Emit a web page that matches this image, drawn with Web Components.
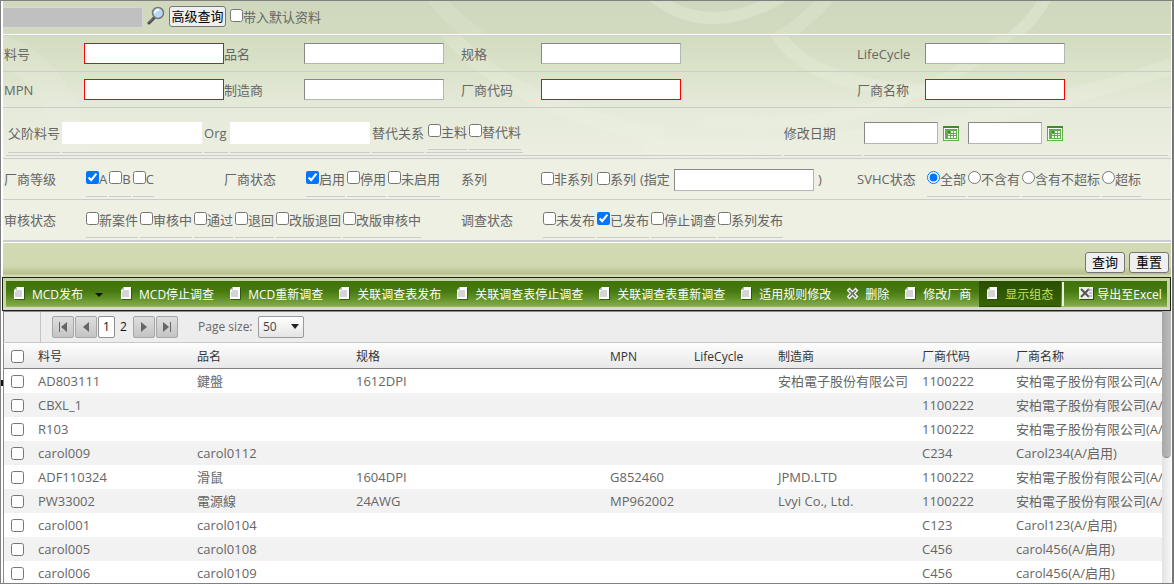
<!DOCTYPE html>
<html lang="zh-CN">
<head>
<meta charset="utf-8">
<title>MCD</title>
<style>
html, body { margin: 0; height: 100%; }
body {
  font: 13px/20px "Open Sans", "Noto Sans CJK SC", sans-serif;
  color: #666;
  background: #fff;
}
</style>
</head>
<body>
<mcd-page>
  <mcd-search-bar slot="search"></mcd-search-bar>
  <mcd-form slot="form">
    <mcd-row>
      <mcd-field required>料号</mcd-field>
      <mcd-field>品名</mcd-field>
      <mcd-field>规格</mcd-field>
      <mcd-field narrow>LifeCycle</mcd-field>
    </mcd-row>
    <mcd-row>
      <mcd-field required>MPN</mcd-field>
      <mcd-field>制造商</mcd-field>
      <mcd-field required>厂商代码</mcd-field>
      <mcd-field narrow required>厂商名称</mcd-field>
    </mcd-row>
    <mcd-relation-row></mcd-relation-row>
    <mcd-row tall>
      <mcd-options name="grade" options="A*|B|C">厂商等级</mcd-options>
      <mcd-options name="vendor" options="启用*|停用|未启用">厂商状态</mcd-options>
      <mcd-series>系列</mcd-series>
      <mcd-options narrow type="radio" name="svhc" options="全部*|不含有|含有不超标|超标">SVHC状态</mcd-options>
    </mcd-row>
    <mcd-row tall last>
      <mcd-options wide name="audit" options="新案件|审核中|通过|退回|改版退回|改版审核中">审核状态</mcd-options>
      <mcd-options name="survey" options="未发布|已发布*|停止调查|系列发布">调查状态</mcd-options>
    </mcd-row>
  </mcd-form>
  <mcd-actions slot="actions"></mcd-actions>
  <mcd-toolbar slot="toolbar">
    <mcd-tool menu>MCD发布</mcd-tool>
    <mcd-tool>MCD停止调查</mcd-tool>
    <mcd-tool>MCD重新调查</mcd-tool>
    <mcd-tool>关联调查表发布</mcd-tool>
    <mcd-tool>关联调查表停止调查</mcd-tool>
    <mcd-tool>关联调查表重新调查</mcd-tool>
    <mcd-tool>适用规则修改</mcd-tool>
    <mcd-tool icon="cross">删除</mcd-tool>
    <mcd-tool>修改厂商</mcd-tool>
    <mcd-tool active>显示组态</mcd-tool>
    <mcd-tool icon="excel" separated>导出至Excel</mcd-tool>
  </mcd-toolbar>
  <mcd-grid slot="grid"></mcd-grid>
</mcd-page>

<script>
const BASE = `
  *, *::before, *::after { box-sizing: border-box; }
  input, button, select { font: inherit; color: inherit; margin: 0; }
  input[type=checkbox], input[type=radio] { width: 13px; height: 13px; flex: none; }
  .box { height: 21px; border: 1px solid; border-color: #888 #b5b5b5 #b5b5b5 #888; background: #fff; padding: 0 2px; border-radius: 0; }
`;
function define(name, render) {
  customElements.define(name, class extends HTMLElement {
    constructor() {
      super();
      this.attachShadow({ mode: 'open' });
    }
    connectedCallback() {
      if (this.shadowRoot.firstChild) return;
      const t = document.createElement('template');
      t.innerHTML = `<style>${BASE}</style>` + render(this);
      this.shadowRoot.append(t.content.cloneNode(true));
    }
  });
}

define('mcd-page', () => `
<style>
  :host { display: flex; flex-direction: column; position: relative; height: 100vh; box-sizing: border-box;
    border: 1px solid #808080; border-right-width: 2px; border-right-color: #75757a; padding: 0 1px 0 2px; overflow: hidden; background: #fff; }
  .handle { position: absolute; left: 0; top: 379px; width: 2px; height: 6px; background: #111; }
</style>
<slot name="search"></slot>
<slot name="form"></slot>
<slot name="actions"></slot>
<slot name="toolbar"></slot>
<slot name="grid"></slot>
<div class="handle"></div>`);

define('mcd-search-bar', () => `
<style>
  :host { display: flex; align-items: center; height: 35px; flex: none; position: relative; overflow: hidden;
    background: linear-gradient(#cfd8bd, #d2dbc0); border-bottom: 1px solid #d0cfd4; box-shadow: inset 0 -1px #fff; box-sizing: border-box; padding-bottom: 3px; }
  .swirl { position: absolute; inset: 0; width: 100%; height: 33px; }
  .q { width: 140px; height: 21px; margin-top: 2px; background: #c0c0c0; border: 1px solid #d5d7d8; border-left: 0; }
  .find { border: 0; background: none; padding: 0; width: 18px; height: 20px; margin: -4px 4px 0 4px; }
  .find svg { display: block; }
  .adv { height: 21px; line-height: 19px; width: 57px; padding: 0; border: 1px solid #767676; border-radius: 3px; background: #efefef; color: #000; white-space: nowrap; }
  label { display: flex; align-items: center; margin-left: 4px; }
  label input { margin-bottom: 2px; }
  .q, .find, .adv, label { position: relative; }
</style>
<svg class="swirl" viewBox="0 0 1168 33" preserveAspectRatio="xMidYMin slice" aria-hidden="true">
  <g fill="none" stroke="#e4ebd7" stroke-opacity=".45">
    <path d="M648-6q60 48 140-4" stroke-width="12"/>
    <path d="M764 44Q800 26 830-10" stroke-width="14" stroke-opacity=".3"/>
    <path d="M1044-6q-14 28-40 46" stroke-width="12"/>
    <path d="M430-6q14 20 50 46" stroke-width="16" stroke-opacity=".25"/>
  </g>
</svg>
<input class="q" type="text" disabled aria-label="查询">
<button class="find" aria-label="搜索"><svg width="18" height="20" viewBox="0 0 18 20">
  <path d="M2 18l5-5" stroke="#444" stroke-width="3" stroke-linecap="round"/>
  <path d="M2 17.500l4-4" stroke="#999" stroke-width="1"/>
  <circle cx="11" cy="8" r="5.500" fill="#b9d8f5" stroke="#777" stroke-width="1.500"/>
  <path d="M8 8a3 3 0 0 1 4-3" stroke="#fff" stroke-width="2" fill="none"/>
</svg></button>
<button class="adv">高级查询</button>
<label><input type="checkbox">带入默认资料</label>`);

define('mcd-form', () => `
<style>
  :host { display: block; flex: none; position: relative; overflow: hidden; border-bottom: 1px solid #fff;
    background: linear-gradient(#d2dcbf, #dbe3cb 36px, #e5eada 72px, #ebeee0 116px, #edf0e3 130px); }
  svg { position: absolute; left: 0; top: 0; width: 100%; height: 160px; }
  .rows { position: relative; }
</style>
<svg viewBox="0 0 1168 160" preserveAspectRatio="xMidYMin slice" aria-hidden="true">
  <g fill="none" stroke="#eef2e4" stroke-opacity=".25">
    <path d="M772-6q40 70 210 60" stroke-width="14"/>
    <path d="M700 84q190 20 310-90" stroke-width="12"/>
    <path d="M440-10q60 80 220 110" stroke-width="16"/>
    <path d="M-10 10q80 30 80 120" stroke-width="30" stroke-opacity=".2"/>
    <path d="M640 110Q900 120 1170 30" stroke-width="16"/>
  </g>
</svg>
<div class="rows"><slot></slot></div>`);

define('mcd-row', () => `
<style>
  :host { display: grid; grid-template-columns: 220fr 237fr 396fr 314fr; height: 36px; box-sizing: border-box;
    padding-left: 1px; border-bottom: 1px solid #cbcccc; }
  :host([tall]) { height: 41px; }
  :host([last]) { height: 42px; border-bottom-width: 2px; }
  ::slotted([wide]) { grid-column: span 2; }
</style>
<slot></slot>`);

define('mcd-field', () => `
<style>
  :host { display: flex; align-items: center; --label: 80px; min-width: 0; }
  :host([narrow]) { --label: 68px; }
  label { width: var(--label); flex: none; }
  input { width: 140px; min-width: 0; }
  :host([required]) .box { border-color: #f00; }
</style>
<label for="v"><slot></slot></label><input class="box" id="v" type="text">`);

const CHECKS = `
  .opts { display: flex; gap: 2px; align-self: flex-end; margin-bottom: 2px; }
  .opts label { display: flex; align-items: center; height: 28px; padding-bottom: 8px; border-bottom: 1px solid #cbcccc; white-space: nowrap; }
  .opts input { margin-bottom: 2px; }
`;
function options(el) {
  const type = el.type || 'checkbox';
  return el.options.split('|').map(o => {
    const on = o.endsWith('*');
    return `<label><input type="${type}" name="${el.name}" ${on ? 'checked' : ''}>${o.replace('*', '')}</label>`;
  }).join('');
}
define('mcd-options', el => `
<style>
  :host { display: flex; align-items: center; min-width: 0; --label: 82px; }
  :host([narrow]) { --label: 70px; }
  .name { width: var(--label); flex: none; }
  ${CHECKS}
</style>
<span class="name" id="n"><slot></slot></span>
<div class="opts" role="group" aria-labelledby="n">${options({ type: el.getAttribute('type'), name: el.getAttribute('name'), options: el.getAttribute('options') })}</div>`);

define('mcd-series', () => `
<style>
  :host { display: flex; align-items: center; min-width: 0; }
  .name { width: 80px; flex: none; }
  label { display: flex; align-items: center; margin-right: 4px; white-space: nowrap; }
  .box { width: 140px; height: 22px; margin: 2px 4px 0 0; }
  label input[type] { margin-bottom: 2px; }
</style>
<span class="name"><slot></slot></span>
<label><input type="checkbox">非系列</label>
<label><input type="checkbox">系列</label>
<label for="s">(指定</label><input class="box" id="s" type="text"><span>)</span>`);

const CAL = `<svg width="16" height="15" viewBox="0 0 16 15" aria-hidden="true">
  <rect x=".5" y=".5" width="15" height="14" fill="#fff" stroke="#5fae4b"/><rect width="16" height="2" fill="#3f8a2c"/>
  <rect x="2" y="3" width="12" height="10" fill="#5fae4b"/>
  <path d="M5 5h2v2H5zM8 5h2v2H8zM11 5h2v2h-2zM5 8h2v1H5zM8 8h2v1H8zM11 8h2v1h-2zM5 10h2v2H5zM8 10h2v2H8zM11 10h2v2h-2z" fill="#fff"/>
  <rect x="5" y="5" width="2" height="2" fill="#3f8a2c"/></svg>`;
define('mcd-relation-row', () => `
<style>
  :host { display: grid; grid-template-columns: 775fr 78fr 304fr; column-gap: 2px; height: 51px; box-sizing: border-box; padding: 0 3px; border-bottom: 1px solid #cbcccc; }
  .part { height: 48px; border-bottom: 1px solid #cbcccc; display: flex; align-items: center; }
  .left { gap: 2px; padding: 0 2px 2px; align-items: stretch; }
  .cell { display: flex; align-items: center; border-bottom: 1px solid #cbcccc; padding-top: 5px; white-space: nowrap; }
  .cell.group { padding: 0 2px; }
  .org { width: 24px; }
  .plain { width: 140px; height: 22px; border: 0; background: #fff; }
  .right { padding-top: 3px; }
  .date { width: 74px; height: 22px; }
  button { width: 16px; height: 15px; padding: 0; border: 0; background: none; margin: 1px 9px 0 5px; }
  svg { display: block; }
  ${CHECKS}
</style>
<div class="part left">
  <label class="cell" for="p">父阶料号</label>
  <span class="cell"><input class="plain" id="p" type="text"></span>
  <label class="cell org" for="o">Org</label>
  <span class="cell"><input class="plain" id="o" type="text"></span>
  <span class="cell" id="r">替代关系</span>
  <div class="cell group"><div class="opts" role="group" aria-labelledby="r">${options({ name: 'rel', options: '主料|替代料' })}</div></div>
</div>
<label class="part right" for="d">修改日期</label>
<div class="part right">
  <input class="box date" id="d" type="text"><button aria-label="选择日期">${CAL}</button>
  <input class="box date" type="text" aria-label="修改日期至"><button aria-label="选择日期">${CAL}</button>
</div>`);

define('mcd-actions', () => `
<style>
  :host { display: flex; justify-content: flex-end; align-items: center; gap: 4px; height: 34px; flex: none; box-sizing: border-box;
    padding: 5px 2px 0 0; background: linear-gradient(#d2dab3, #d0d8b0 23px, #b6c08c 31px, #d2dab3 32px); }
  button { width: 40px; height: 21px; line-height: 19px; padding: 0; border: 1px solid #767676; border-radius: 3px; background: #efefef; color: #000; }
</style>
<button>查询</button><button>重置</button>`);

define('mcd-toolbar', () => `
<style>
  :host { display: block; flex: none; margin-left: -1px; box-sizing: border-box; height: 34px; border: 1px solid #1c2411;
    background: linear-gradient(#c5d3a2, #c9d6a8 28px, #d9d9d9 31px); padding: 3px; }
  .bar { height: 26px; display: flex; overflow: hidden; background: linear-gradient(#3f7308, #467911 10px, #5f9027 17px, #85ab49 25px, #a6c275); }
</style>
<div class="bar" role="toolbar"><slot></slot></div>`);

const ICONS = {
  page: `<svg width="12" height="14" viewBox="0 0 12 14"><path d="M3 1h8v12H1V4z" fill="#234800" opacity=".7"/><path d="M3 0h7v12H0V3z" fill="#fff"/><path d="M3 3h5v7H1V5z" fill="#d2d4d6"/><path d="M0 3h3V0z" fill="#b9c2ae"/></svg>`,
  cross: `<svg width="12" height="14" viewBox="0 0 12 14"><path d="M1 2l9 9M10 2l-9 9" stroke="#f4f4f4" stroke-width="4"/><path d="M2 3l7 7M9 3l-7 7" stroke="#666" stroke-width="1.500"/></svg>`,
  excel: `<svg width="15" height="14" viewBox="0 0 15 14"><path d="M1 1h14v12H1z" fill="#2b4c0c"/><path d="M0 0h14v12H0z" fill="#eee"/><path d="M2 2l8 8M10 2l-8 8" stroke="#555" stroke-width="2"/><path d="M9 3h4M10 6h3M9 9h4" stroke="#999"/></svg>`
};
define('mcd-tool', el => `
<style>
  :host { display: flex; flex: none; }
  :host([separated])::before { content: ""; width: 2px; margin: 1px 7px 1px 1px; background: #e9efdf; }
  button { display: flex; align-items: center; height: 26px; padding: 2px 8px 0; border: 0; background: none; color: #fff; font-size: 12px; white-space: nowrap; }
  .icon { width: 18px; height: 14px; margin-top: -2px; }
  .icon svg { display: block; }
  :host([active]) button { background: linear-gradient(#294d00, #396504); color: #c3e35c; box-shadow: inset 0 -1px #294d00; }
  .arrow { width: 8px; height: 4px; margin: 0 2px 0 12px; background: #111; clip-path: polygon(0 0, 100% 0, 50% 100%); }
</style>
<button><span class="icon">${ICONS[el.getAttribute('icon') || 'page']}</span><slot></slot>${el.hasAttribute('menu') ? '<span class="arrow"></span>' : ''}</button>`);

define('mcd-pager', () => `
<style>
  :host { display: flex; align-items: center; height: 32px; background: #ededed; border-top: 1px solid #8a8a8a; border-bottom: 1px solid #c9c9c9; box-sizing: border-box; }
  .gutter { width: 38px; align-self: stretch; border-left: 1px solid #8a8a8a; border-right: 1px solid #c4c4c4; margin-right: 11px; }
  button { width: 22px; height: 22px; margin-right: 1px; padding: 0; border: 1px solid #a6a6a6; border-radius: 2px; background: linear-gradient(#dedede, #c4c4c4); display: grid; place-items: center; }
  a { width: 17px; height: 22px; text-align: center; font-size: 12px; line-height: 20px; color: #111; text-decoration: none; border: 1px solid transparent; border-radius: 2px; }
  a.on { background: #fff; border-color: #8f8f8f; }
  .next { margin-left: 1px; }
  label { margin-left: 19px; width: 60px; white-space: nowrap; font-size: 12px; }
  .combo { position: relative; }
  select { appearance: none; width: 46px; height: 22px; padding: 0 4px; font-size: 12px; line-height: 20px; color: #444; border: 1px solid #9a9a9a; border-radius: 2px; background: linear-gradient(#fff, #e4e4e4); display: block; }
  .combo::after { content: ""; position: absolute; right: 5px; top: 8px; width: 8px; height: 5px; background: #222; clip-path: polygon(0 0, 100% 0, 50% 100%); }
</style>
<div class="gutter"></div>
<button aria-label="首页"><svg width="10" height="10"><path d="M1 0h1v10H1zM9 0v10L3 5z" fill="#666"/></svg></button>
<button aria-label="上一页"><svg width="10" height="10"><path d="M8 0v10L2 5z" fill="#666"/></svg></button>
<a class="on" href="#1" aria-current="page">1</a><a href="#2">2</a>
<button class="next" aria-label="下一页"><svg width="10" height="10"><path d="M2 0v10l6-5z" fill="#666"/></svg></button>
<button aria-label="末页"><svg width="10" height="10"><path d="M8 0h1v10H8zM1 0v10l6-5z" fill="#666"/></svg></button>
<label for="ps">Page size:</label>
<span class="combo"><select id="ps"><option>50</option></select></span>`);

const COLS = ['料号', '品名', '规格', 'MPN', 'LifeCycle', '制造商', '厂商代码', '厂商名称'];
const AB = '安柏電子股份有限公司';
const ROWS = [
  ['AD803111', '鍵盤', '1612DPI', '', '', AB, '1100222', AB + '(A/启用)'],
  ['CBXL_1', '', '', '', '', '', '1100222', AB + '(A/启用)'],
  ['R103', '', '', '', '', '', '1100222', AB + '(A/启用)'],
  ['carol009', 'carol0112', '', '', '', '', 'C234', 'Carol234(A/启用)'],
  ['ADF110324', '滑鼠', '1604DPI', 'G852460', '', 'JPMD.LTD', '1100222', AB + '(A/启用)'],
  ['PW33002', '電源線', '24AWG', 'MP962002', '', 'Lvyi Co., Ltd.', '1100222', AB + '(A/启用)'],
  ['carol001', 'carol0104', '', '', '', '', 'C123', 'Carol123(A/启用)'],
  ['carol005', 'carol0108', '', '', '', '', 'C456', 'carol456(A/启用)'],
  ['carol006', 'carol0109', '', '', '', '', 'C456', 'carol456(A/启用)']
];
define('mcd-grid', () => `
<style>
  :host { display: flex; flex: 1; min-height: 0; }
  .main { flex: 1; min-width: 0; overflow: hidden; }
  table { width: 100%; table-layout: fixed; border-collapse: separate; border-spacing: 0; border-left: 1px solid #8a8a8a; }
  th, td { height: 24px; padding: 0 0 0 7px; text-align: left; font-weight: normal; white-space: nowrap; overflow: hidden; }
  th { height: 26px; padding-top: 2px; font-size: 12px; color: #333; background: linear-gradient(#fdfdfd, #e8e8e8); border-bottom: 1px solid #828282; }
  tbody tr:nth-child(even) { background: #f2f2f2; }
  input { display: block; }
  .pick { width: 27px; } .w159 { width: 159px; } .w254 { width: 254px; } .w84 { width: 84px; } .w144 { width: 144px; } .w94 { width: 94px; }
  .scroll { width: 9px; flex: none; background: linear-gradient(90deg, #e2e2e2, #f7f7f7); }
  .thumb { height: 147px; border-radius: 0 0 5px 5px; background: linear-gradient(90deg, #a8a8a8, #bdbdbd); border-bottom: 1px solid #888; }
</style>
<div class="main">
  <mcd-pager></mcd-pager>
  <table>
    <colgroup><col class="pick"><col class="w159"><col class="w159"><col class="w254"><col class="w84"><col class="w84"><col class="w144"><col class="w94"><col></colgroup>
    <thead><tr><th><input type="checkbox" aria-label="全选"></th>${COLS.map(c => `<th>${c}</th>`).join('')}</tr></thead>
    <tbody>${ROWS.map(r => `<tr><td><input type="checkbox" aria-label="${r[0]}"></td>${r.map(c => `<td>${c}</td>`).join('')}</tr>`).join('')}</tbody>
  </table>
</div>
<div class="scroll"><div class="thumb"></div></div>`);
</script>
</body>
</html>
